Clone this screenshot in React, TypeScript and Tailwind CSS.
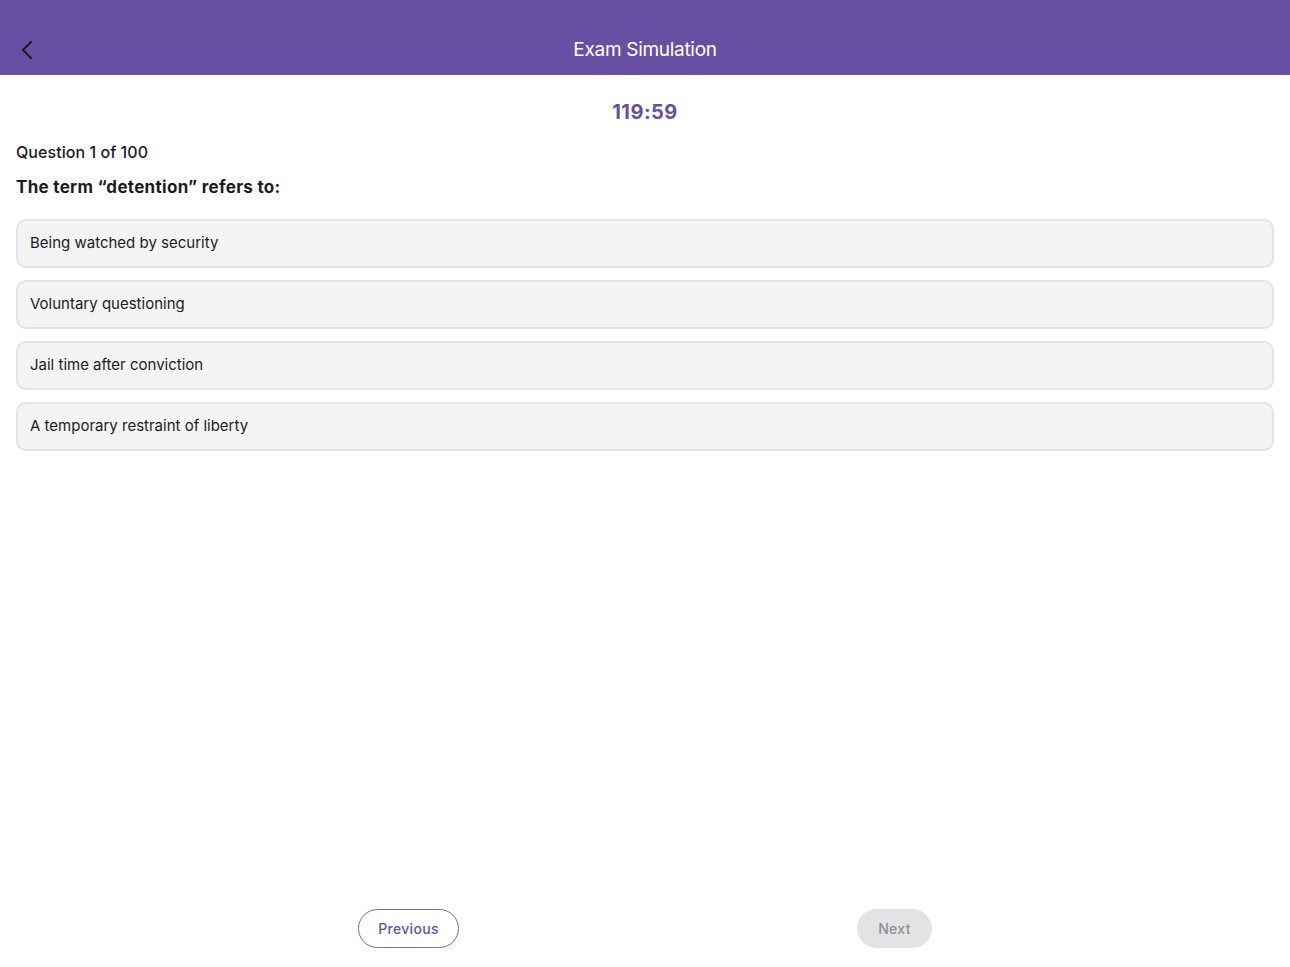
const options = [
  "Being watched by security",
  "Voluntary questioning",
  "Jail time after conviction",
  "A temporary restraint of liberty",
];

export default function App() {
  return (
    <div className="h-screen flex flex-col bg-white font-['Inter',sans-serif] text-[#1c1b1f]">
      {/* Top bar */}
      <header className="h-[75px] shrink-0 bg-[#6750a4] flex items-end pb-[11px] px-[16px]">
        <button className="w-[24px] h-[24px] flex items-center justify-center text-[#1c1b1f] mb-[2px]">
          <svg width="24" height="24" viewBox="0 0 24 24" fill="none" stroke="currentColor" strokeWidth={2.2} strokeLinecap="round" strokeLinejoin="round">
            <path d="M15 4l-8 8 8 8" />
          </svg>
        </button>
        <h1 className="flex-1 text-center text-white text-[19px] leading-[28px] pr-[24px] tracking-[-0.3px]">Exam Simulation</h1>
      </header>

      <main className="flex-1 flex flex-col px-[16px]">
        <div className="text-center text-[#6750a4] font-bold text-[20px] leading-[28px] mt-[23px] tracking-[0.5px]">119:59</div>

        <p className="mt-[15px] text-[16px] leading-[22px] font-medium tracking-[0.05px]">Question 1 of 100</p>
        <h2 className="mt-[12px] text-[17px] leading-[24px] font-bold tracking-[0.3px]">The term “detention” refers to:</h2>

        <div className="mt-[20px] flex flex-col gap-[12px]">
          {options.map((o) => (
            <button
              key={o}
              className="h-[49px] w-full text-left px-[12px] rounded-[10px] border-2 border-[#e4e4e4] bg-[#f4f4f4] text-[15px] tracking-[0] text-[#1c1b1f]"
            >
              {o}
            </button>
          ))}
        </div>

        <div className="flex-1" />

        {/* Navigation */}
        <div className="flex justify-center gap-[398px] pb-[19px]">
          <button className="h-[39px] w-[101px] rounded-full border border-[#79747e] text-[#6750a4] text-[14px] font-medium tracking-[0.3px]">
            Previous
          </button>
          <button className="h-[39px] w-[75px] rounded-full bg-[#e3e3e5] text-[#8e8e93] text-[14px] font-medium tracking-[0.3px]">
            Next
          </button>
        </div>
      </main>
    </div>
  );
}
